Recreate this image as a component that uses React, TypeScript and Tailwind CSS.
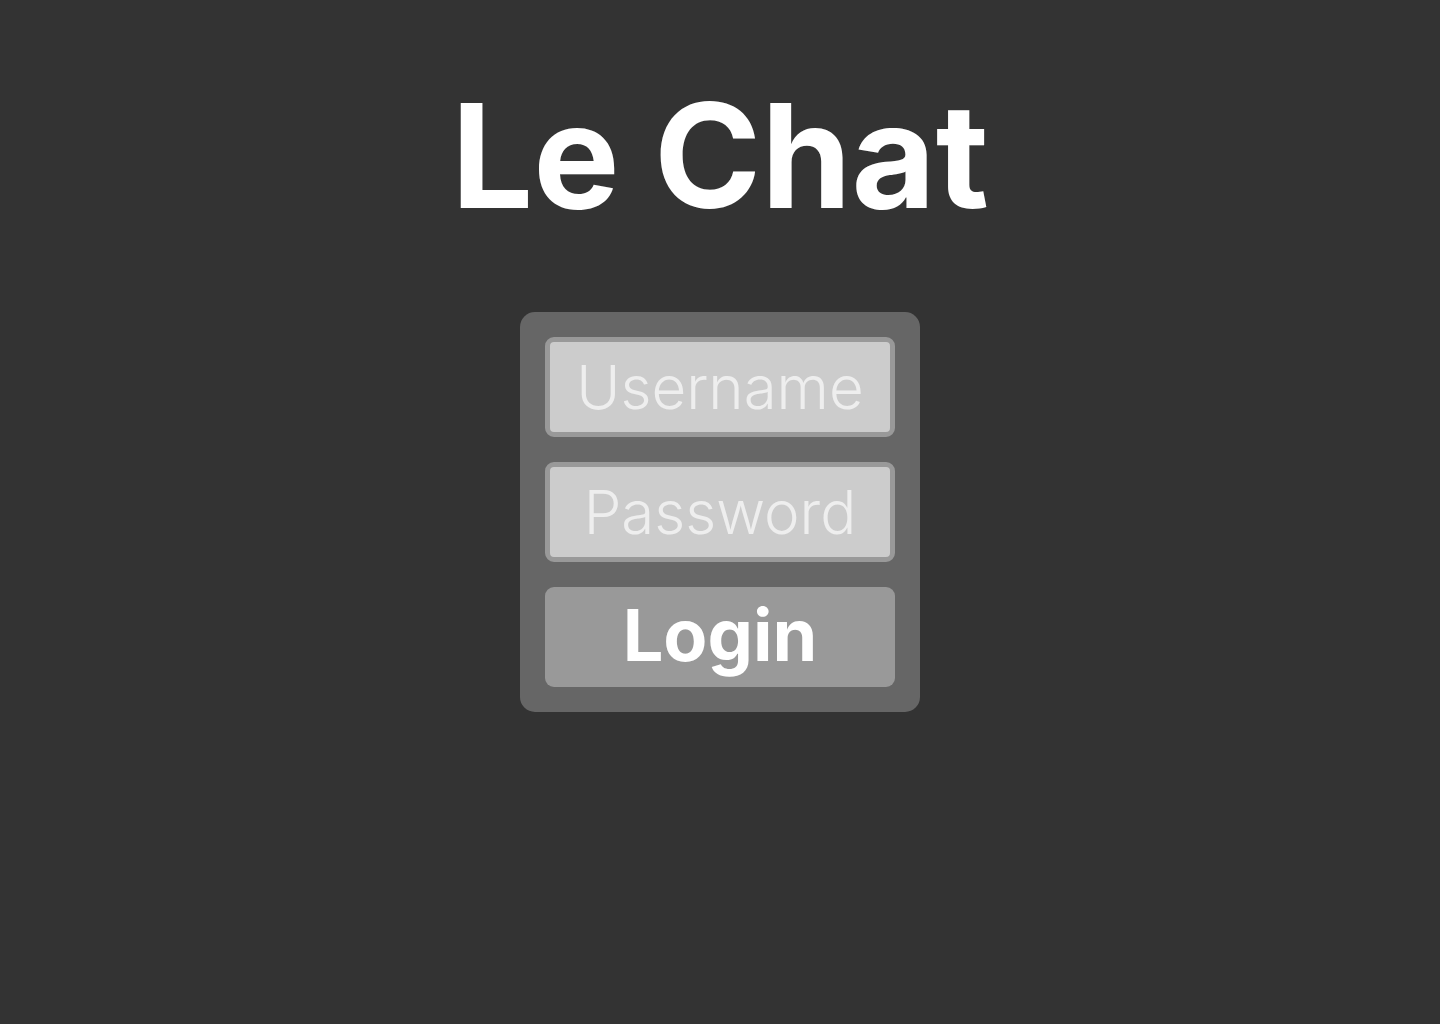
const App = () => {
    return (
        <div className="min-h-screen w-full bg-[#333333] flex flex-col items-center font-['Inter',sans-serif]">
            <h1 className="mt-[66px] text-[145px] leading-[180px] font-bold text-white">Le Chat</h1>
            <form className="mt-[66px] w-[400px] p-[25px] bg-[#666666] rounded-[15px] flex flex-col gap-[25px]">
                <input
                    type="text"
                    placeholder="Username"
                    className="h-[100px] w-full border-[5px] border-[#999999] bg-[#cccccc] rounded-[9px] text-center text-[60px] font-light text-[#eeeeee] placeholder:text-[#eeeeee] outline-none"
                />
                <input
                    type="password"
                    placeholder="Password"
                    className="h-[100px] w-full border-[5px] border-[#999999] bg-[#cccccc] rounded-[9px] text-center text-[60px] font-light text-[#eeeeee] placeholder:text-[#eeeeee] outline-none"
                />
                <button type="button" className="h-[100px] w-full pb-[4px] bg-[#999999] rounded-[9px] text-[72px] leading-none font-bold text-white">
                    Login
                </button>
            </form>
        </div>
    )
};

export default App;
